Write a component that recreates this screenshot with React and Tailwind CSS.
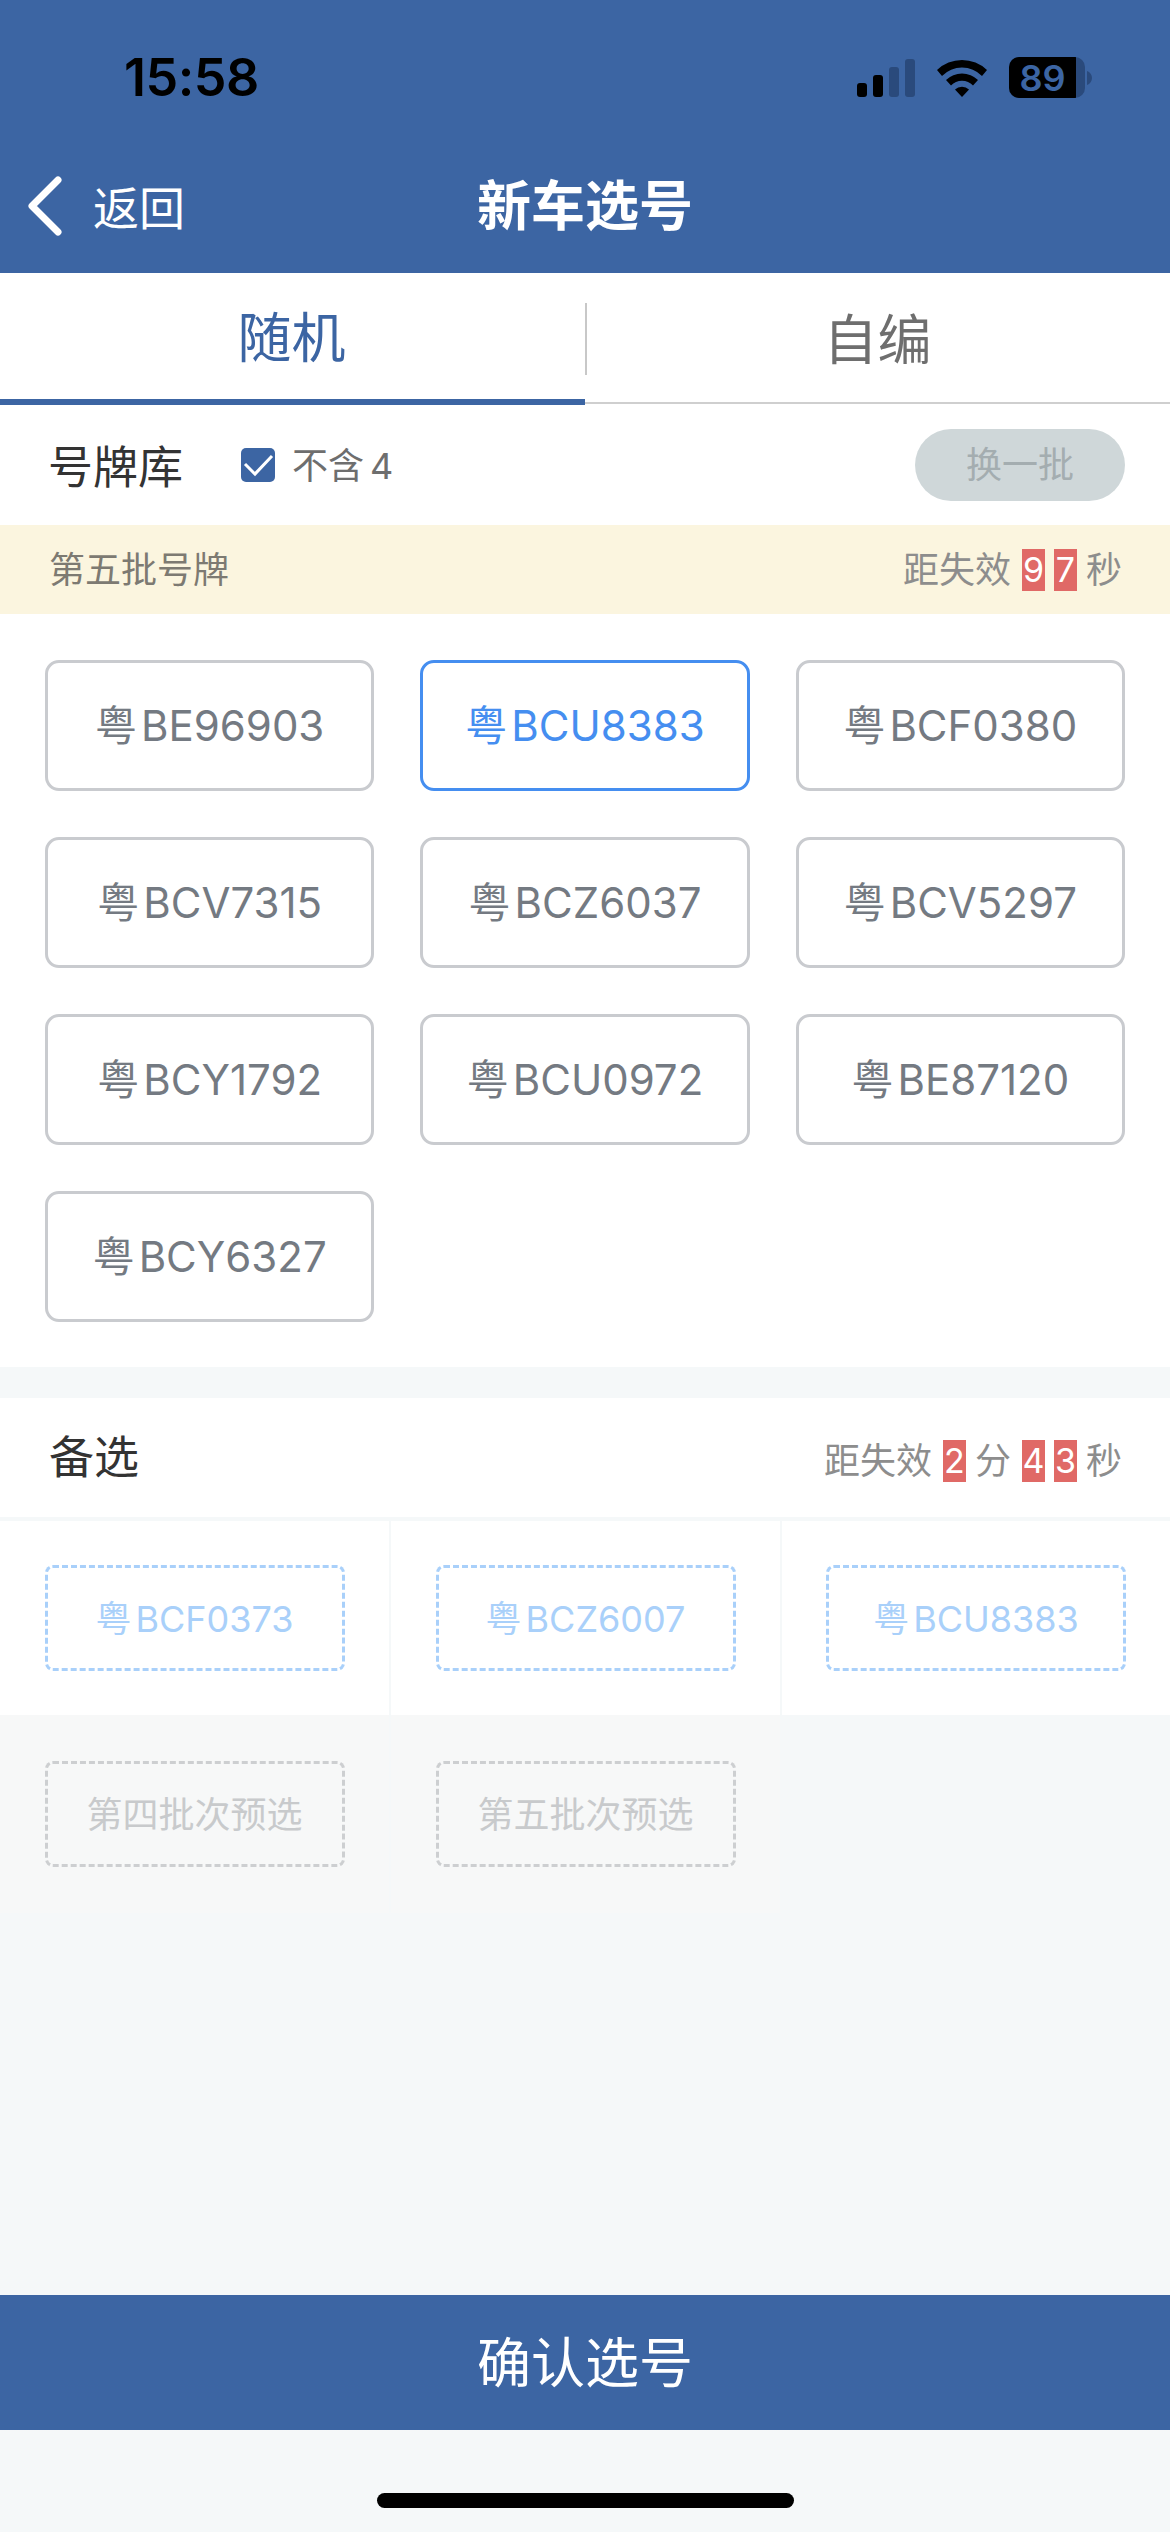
const plates = [
  "BE96903", "BCU8383", "BCF0380",
  "BCV7315", "BCZ6037", "BCV5297",
  "BCY1792", "BCU0972", "BE87120",
  "BCY6327",
];
const backups = ["BCF0373", "BCZ6007", "BCU8383"];
const presets = ["第四批次预选", "第五批次预选"];

const Digit = ({ value }) => (
  <span className="flex h-[42px] w-[23px] items-center justify-center bg-[#e06966] text-[34px] leading-none text-white">
    {value}
  </span>
);

const Label = ({ children }) => <span className="pr-[2px] text-[36px] leading-none text-[#8d8d8d] last:pr-0">{children}</span>;

const StatusBar = () => (
  <div className="flex h-[150px] items-start justify-between pl-[124px] pr-[78px] pt-[50px]">
    <span className="text-[52px] font-semibold leading-[56px] tracking-[-0.5px] text-black">15:58</span>
    <div className="flex items-center gap-[22px] pt-[7px]">
      <svg width="58" height="38" viewBox="0 0 58 38">
        <rect x="0" y="24" width="10" height="14" rx="3" fill="#000" />
        <rect x="16" y="16" width="10" height="22" rx="3" fill="#000" />
        <rect x="32" y="8" width="10" height="30" rx="3" fill="#2a4a7c" />
        <rect x="48" y="0" width="10" height="38" rx="3" fill="#2a4a7c" />
      </svg>
      <svg width="50" height="38" viewBox="0 0 50 38">
        <path d="M0 11 A36 36 0 0 1 50 11 L45 17 A28 28 0 0 0 5 17 Z" fill="#000" />
        <path d="M9 21 A23 23 0 0 1 41 21 L36 26.5 A15 15 0 0 0 14 26.5 Z" fill="#000" />
        <path d="M18 30.5 A10 10 0 0 1 32 30.5 L25 38 Z" fill="#000" />
      </svg>
      <div className="flex items-center">
        <div className="flex h-[41px] w-[76px] items-center overflow-hidden rounded-[10px] bg-[#2a4a7c]">
          <div className="flex h-full w-[67px] items-center justify-center bg-black text-[36px] font-semibold leading-none text-[#3c65a3]">
            89
          </div>
        </div>
        <svg width="5" height="14" viewBox="0 0 5 14" className="ml-[2px]">
          <path d="M0 0 C3 1 5 4 5 7 C5 10 3 13 0 14 Z" fill="#2a4a7c" />
        </svg>
      </div>
    </div>
  </div>
);

export default function App() {
  return (
    <div className="flex min-h-[2532px] w-full flex-col bg-[#f5f8f9] font-['Inter','Noto_Sans_CJK_SC',sans-serif]">
      {/* Header */}
      <div className="h-[273px] bg-[#3c65a3]">
        <StatusBar />
        <div className="relative flex h-[112px] items-center justify-center">
          <div className="absolute left-[26px] top-0 flex h-full items-center gap-[29px]">
            <svg width="38" height="60" viewBox="0 0 38 60" fill="none">
              <path d="M32 4 L6 30 L32 56" stroke="#fff" strokeWidth="7" strokeLinecap="round" strokeLinejoin="round" />
            </svg>
            <span className="pt-[4px] text-[46px] leading-none text-white">返回</span>
          </div>
          <span className="pt-[2px] text-[54px] font-bold leading-none text-white">新车选号</span>
        </div>
      </div>

      {/* Tabs */}
      <div className="relative flex h-[131px] border-b-2 border-[#cfcfcf] bg-white">
        <div className="flex h-[132px] w-[585px] items-center justify-center border-b-[6px] border-[#3c65a3] pr-[2px] pt-[6px] text-[54px] leading-none text-[#3c65a3]">
          随机
        </div>
        <div className="mt-[30px] h-[72px] w-[2px] bg-[#c8c8c8]" />
        <div className="flex flex-1 items-center justify-center pr-[2px] pt-[6px] text-[54px] leading-none text-[#6e6e6e]">自编</div>
      </div>

      {/* Plate pool */}
      <div className="flex h-[121px] items-center justify-between bg-white pl-[48px] pr-[45px]">
        <div className="flex items-center">
          <span className="pt-[5px] text-[45px] leading-none text-[#333333]">号牌库</span>
          <span className="ml-[58px] flex h-[34px] w-[34px] items-center justify-center rounded-[5px] bg-[#3c65a3]">
            <svg width="34" height="34" viewBox="0 0 34 34" fill="none">
              <path d="M4 16 L14 26 L31 8" stroke="#fff" strokeWidth="3" />
            </svg>
          </span>
          <span className="ml-[17px] flex gap-[6px] pt-[2px] text-[36px] leading-none text-[#6e6e6e]">
            <span>不含</span>
            <span>4</span>
          </span>
        </div>
        <button className="h-[72px] w-[210px] rounded-full bg-[#cfd7d9] text-[36px] text-[#a4adb0]">换一批</button>
      </div>

      <div className="flex h-[89px] items-center justify-between bg-[#fbf5df] pl-[49px] pr-[48px]">
        <span className="text-[36px] leading-none text-[#7d7a72]">第五批号牌</span>
        <div className="flex items-center gap-[9px]">
          <Label>距失效</Label>
          <Digit value="9" />
          <Digit value="7" />
          <Label>秒</Label>
        </div>
      </div>

      <div className="grid grid-cols-3 gap-[46px] bg-white px-[45px] pb-[45px] pt-[46px]">
        {plates.map((plate, i) => (
          <div
            key={i}
            className={
              i === 1
                ? "flex h-[131px] items-center justify-center gap-[4px] rounded-[14px] border-[3px] border-[#458ef0] text-[42px] leading-none text-[#458ef0]"
                : "flex h-[131px] items-center justify-center gap-[4px] rounded-[14px] border-[3px] border-[#c9cbcf] text-[42px] leading-none text-[#747a82]"
            }
          >
            <span>粤</span>
            <span>{plate}</span>
          </div>
        ))}
      </div>

      {/* Backups */}
      <div className="mt-[31px] flex h-[119px] items-center justify-between bg-white pl-[49px] pr-[48px]">
        <span className="text-[45px] leading-none text-[#333333]">备选</span>
        <div className="flex items-center gap-[9px] pt-[6px]">
          <Label>距失效</Label>
          <Digit value="2" />
          <Label>分</Label>
          <Digit value="4" />
          <Digit value="3" />
          <Label>秒</Label>
        </div>
      </div>

      <div className="mt-[4px] grid grid-cols-[389px_389px_1fr] gap-x-[2px]">
        {backups.map((plate) => (
          <div key={plate} className="flex h-[194px] items-center justify-center bg-white">
            <div className="flex h-[106px] w-[300px] items-center justify-center gap-[4px] rounded-[8px] border-[3px] border-dashed border-[#a9d0fa] pt-[2px] text-[36px] leading-none text-[#a9d0fa]">
              <span>粤</span>
              <span>{plate}</span>
            </div>
          </div>
        ))}
        {presets.map((text) => (
          <div key={text} className="flex h-[198px] items-center justify-center bg-[#f7f8f8]">
            <div className="flex h-[106px] w-[300px] items-center justify-center rounded-[8px] border-[3px] border-dashed border-[#cdcfd1] pt-[2px] text-[36px] leading-none text-[#c8cacc]">
              {text}
            </div>
          </div>
        ))}
      </div>

      <div className="flex-1" />

      {/* Footer */}
      <button className="h-[135px] w-full bg-[#3c65a3] pt-[2px] text-[54px] leading-none text-white">确认选号</button>
      <div className="flex h-[102px] items-start justify-center pt-[63px]">
        <div className="h-[15px] w-[417px] rounded-full bg-black" />
      </div>
    </div>
  );
}
